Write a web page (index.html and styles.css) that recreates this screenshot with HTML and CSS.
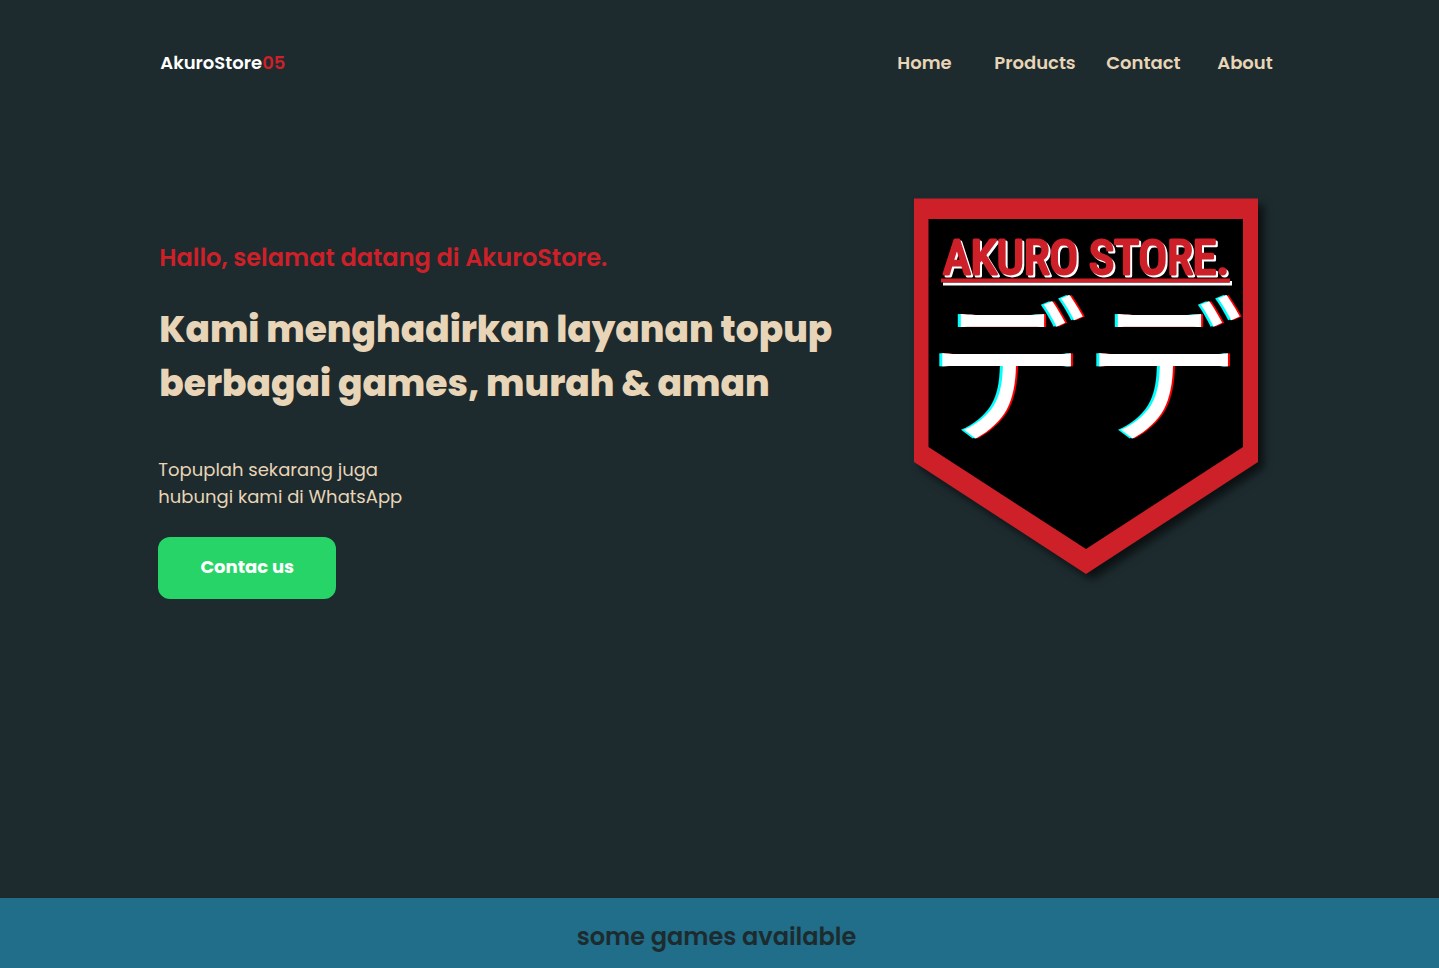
FILE: index.html
```
<!DOCTYPE html>
<html lang="id">
<head>
<meta charset="utf-8">
<meta name="viewport" content="width=device-width, initial-scale=1">
<title>AkuroStore05</title>
<link rel="stylesheet" href="styles.css">
</head>
<body>
<header class="header">
  <a class="brand" href="#">AkuroStore<span class="brand-number">05</span></a>
  <nav class="nav">
    <a href="#home">Home</a>
    <a href="#products">Products</a>
    <a href="#contact">Contact</a>
    <a href="#about">About</a>
  </nav>
</header>
<main>
  <section class="hero" id="home">
    <div class="hero-copy">
      <p class="greeting">Hallo, selamat datang di AkuroStore.</p>
      <h1 class="title">Kami menghadirkan layanan topup<br>berbagai games, murah &amp; aman</h1>
      <p class="lead">Topuplah sekarang juga<br>hubungi kami di WhatsApp</p>
      <button class="cta" type="button">Contac us</button>
    </div>
    <svg class="emblem" viewBox="0 0 375 400" role="img" aria-label="Akuro Store">
      <path class="shield" d="M8 8.500H352V272L180 384L8 272Z"/>
      <path class="shield-inner" d="M22.500 29H337V257L180 359L22.500 257Z"/>
      <text class="emblem-name" x="180" y="84" text-anchor="middle">AKURO STORE.</text>
      <path d="M37 92.500H326V95.500H37ZM323.500 91H326V95H323.500Z" fill="#fff"/>
      <path d="M35 88.500H324V92.500H35Z" fill="#cd2028"/>
      <text class="emblem-kana" x="23" y="239">デデ</text>
    </svg>
  </section>
  <section class="games" id="products">
    <h2 class="games-title">some games available</h2>
  </section>
</main>
</body>
</html>
```
FILE: styles.css
```
* { box-sizing: border-box; }

body {
  margin: 0;
  min-height: 100vh;
  background: #1d2b2f;
  color: #e8d5b7;
  font-family: Poppins, Inter, "Open Sans", sans-serif;
  font-size: 18px;
  line-height: 27px;
}

h1, h2, p { margin: 0; }
a { color: inherit; text-decoration: none; }

.header {
  display: flex;
  justify-content: space-between;
  padding: 49px 11% 0;
  font-weight: 600;
}

.brand { color: #fff; padding-left: 2px; }
.brand-number { color: #cd2028; }

.nav {
  display: grid;
  grid-template-columns: 97px 112px 111px auto;
  padding-right: 8px;
}

.hero {
  display: flex;
  justify-content: space-between;
  align-items: flex-start;
  padding: 114px 11% 299px;
}

.hero-copy { padding-top: 49px; }

.greeting {
  padding-left: 1px;
  color: #cd2028;
  font-size: 24px;
  line-height: 38px;
  font-weight: 600;
}

.title {
  margin-top: 26px;
  padding-left: 1px;
  font-size: 36px;
  line-height: 54px;
  font-weight: 800;
}

.lead { margin-top: 45px; }

.cta {
  margin-top: 27px;
  padding: 0 0 4px;
  width: 178px;
  height: 62px;
  border: 0;
  border-radius: 12px;
  background: #27d468;
  color: #fff;
  font: inherit;
  font-weight: 700;
  cursor: pointer;
}

.emblem { flex: 0 0 auto; width: 375px; height: auto; }

.shield {
  fill: #cd2028;
  filter: drop-shadow(6px 6px 4px rgba(0, 0, 0, .6));
}

.shield-inner { fill: #000; }

.emblem-name {
  fill: #cd2028;
  stroke: #cd2028;
  stroke-width: 3px;
  stroke-linejoin: round;
  font-family: "Roboto Condensed", "Liberation Sans Narrow", "Open Sans Condensed", Roboto, sans-serif;
  font-size: 48px;
  font-weight: 400;
  filter: drop-shadow(2px 2px 0 #fff);
}

.emblem-kana {
  fill: #fff;
  font-family: "Noto Sans CJK JP", sans-serif;
  font-size: 157px;
  font-weight: 400;
  filter: drop-shadow(2px 0 0 #f00) drop-shadow(-3px 0 0 #0ff);
}

.games {
  padding: 20px 22px 12px 16px;
  background: #206e89;
  color: #1d2b2f;
  text-align: center;
}

.games-title {
  font-size: 24px;
  line-height: 38px;
  font-weight: 600;
}
```
